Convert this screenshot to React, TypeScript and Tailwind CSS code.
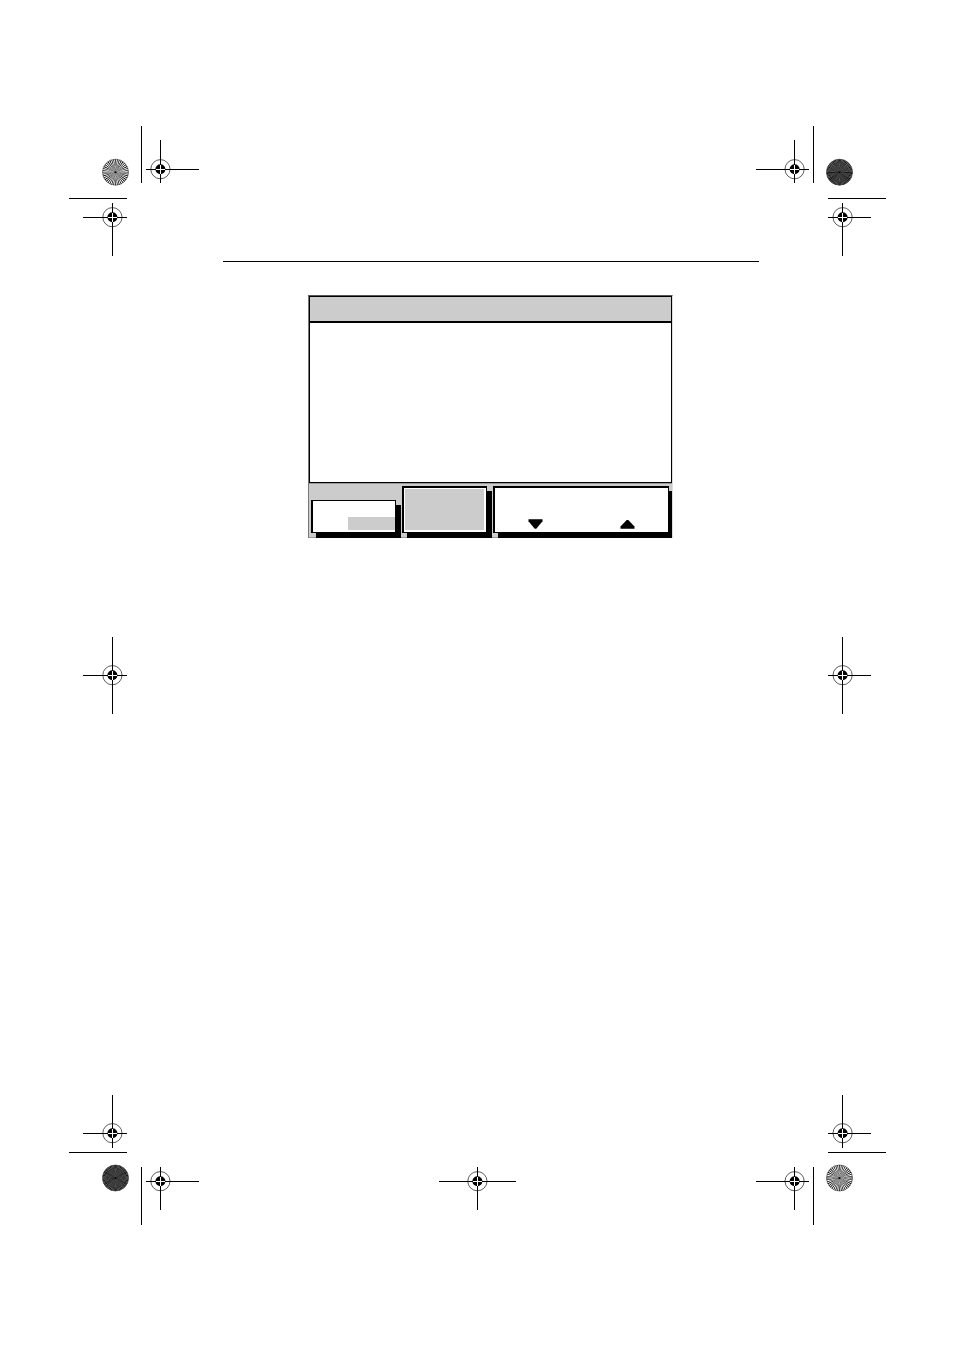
type MarkProps = {
  x: number
  y: number
  left: number
  right: number
  top: number
  bottom: number
}

// Registration target: ring, solid disc and hairlines that invert inside the disc
function Target({ x, y, left, right, top, bottom }: MarkProps) {
  return (
    <g>
      <circle cx={x + 0.4} cy={y + 0.2} r={9.6} fill="none" stroke="#333" strokeWidth={0.8} />
      <rect x={left} y={y} width={right - left} height={1} fill="#000" />
      <rect x={x} y={top} width={1} height={bottom - top} fill="#000" />
      <circle cx={x + 0.4} cy={y + 0.3} r={5} fill="#000" />
      <rect x={x - 4} y={y} width={9} height={1} fill="#fff" />
      <rect x={x} y={y - 4} width={1} height={9} fill="#fff" />
    </g>
  )
}

// Star target made of thin wedges around a centre point
function Star({ x, y, dark }: { x: number; y: number; dark?: boolean }) {
  return (
    <g>
      <circle cx={x} cy={y} r={13} fill={dark ? '#aaa' : '#fff'} />
      <circle
        cx={x}
        cy={y}
        r={6.5}
        fill="none"
        stroke="#000"
        strokeWidth={13}
        pathLength={dark ? 112 : 80}
        strokeDasharray={dark ? '1.3 0.7' : '0.9 1.1'}
        strokeDashoffset={dark ? 0.65 : 0.45}
      />
      <circle cx={x} cy={y} r={13} fill="none" stroke="#333" strokeWidth={0.6} />
      <circle cx={x} cy={y} r={1} fill="#000" />
    </g>
  )
}

function TopCorner({ flip }: { flip?: boolean }) {
  return (
    <svg width="130" height="130" viewBox="0 0 130 130" aria-hidden="true">
      <g transform={flip ? 'translate(130 0) scale(-1 1)' : undefined}>
        <rect x={72} y={0} width={1} height={57} />
        <rect x={0} y={72} width={58} height={1} />
        <Target x={91} y={43} left={77} right={130} top={14} bottom={57} />
        <Target x={43} y={91} left={flip ? 15 : 14} right={58} top={77} bottom={130} />
        <Star x={46.5} y={46.2} dark={flip} />
      </g>
    </svg>
  )
}

function BottomCorner({ flip }: { flip?: boolean }) {
  return (
    <svg width="130" height="130" viewBox="0 0 130 130" aria-hidden="true">
      <g transform={flip ? 'translate(130 0) scale(-1 1)' : undefined}>
        <rect x={72} y={72} width={1} height={58} />
        <rect x={0} y={57} width={58} height={1} />
        <Target x={43} y={38} left={flip ? 15 : 14} right={58} top={0} bottom={53} />
        <Target x={91} y={86} left={77} right={130} top={72} bottom={115} />
        <Star x={46.5} y={83} dark={!flip} />
      </g>
    </svg>
  )
}

function SideMark({ flip }: { flip?: boolean }) {
  return (
    <svg width="58" height="77" viewBox="0 0 58 77" className="shrink-0 self-center" aria-hidden="true">
      <g transform={flip ? 'translate(58 0) scale(-1 1)' : undefined}>
        <Target x={43} y={38} left={flip ? 15 : 14} right={58} top={0} bottom={77} />
      </g>
    </svg>
  )
}

function Panel() {
  return (
    <section className="mt-[33px] mr-[86px] ml-[85px] overflow-hidden border-t border-r border-l border-t-[#555] border-r-[#ddd] border-l-[#777]">
      <div className="h-[27px] border border-b-2 border-black bg-[#ccc]" />
      <div className="h-40 border-r border-b border-l border-black bg-white" />
      <div className="flex items-end gap-[6px] border-y border-[#999] bg-[#ccc] pt-[2px] pr-[3px] pb-1 pl-[2px]">
        <button
          type="button"
          aria-label="Value"
          className="flex h-[33px] w-[85px] items-end justify-end border border-l-2 border-black bg-white pb-[2px] shadow-[5px_5px_0_#000]"
        >
          <span className="h-[13px] w-[47px] bg-[#ccc]" />
        </button>
        <button
          type="button"
          aria-label="Select"
          className="flex h-[47px] w-[85px] border border-t-2 border-l-2 border-black bg-white pt-px pr-[2px] pb-[2px] pl-px shadow-[5px_5px_0_#000]"
        >
          <span className="h-full flex-1 bg-[#ccc]" />
        </button>
        <div className="flex h-[47px] flex-1 items-end justify-center gap-[77px] border border-t-2 border-l-2 border-black bg-white pb-[3px] shadow-[5px_5px_0_#000]">
          <button type="button" aria-label="Down">
            <svg width="15" height="10" viewBox="0 0 15 10" aria-hidden="true">
              <path d="M0.5 0.3H14.5V2.3L8.3 9.7H6.7L0.5 2.3Z" />
            </svg>
          </button>
          <button type="button" aria-label="Up">
            <svg width="15" height="10" viewBox="0 0 15 10" aria-hidden="true">
              <path d="M0.5 9.8H14.5V7.6L8.3 0.9H6.7L0.5 7.6Z" />
            </svg>
          </button>
        </div>
      </div>
    </section>
  )
}

export default function App() {
  return (
    <div className="flex min-h-screen flex-col bg-white pt-[126px] pr-[68px] pb-[125px] pl-[69px] font-['Liberation_Sans',sans-serif]">
      <header className="flex justify-between">
        <TopCorner />
        <TopCorner flip />
      </header>

      <div className="flex flex-1">
        <SideMark />
        <main className="mr-[69px] ml-24 flex-1 pt-[5px]">
          <hr className="border-t border-black" />
          <Panel />
        </main>
        <SideMark flip />
      </div>

      <footer className="flex items-end justify-between">
        <BottomCorner />
        <svg width="77" height="58" viewBox="0 0 77 58" aria-hidden="true">
          <Target x={38} y={14} left={0} right={77} top={0} bottom={43} />
        </svg>
        <BottomCorner flip />
      </footer>
    </div>
  )
}
